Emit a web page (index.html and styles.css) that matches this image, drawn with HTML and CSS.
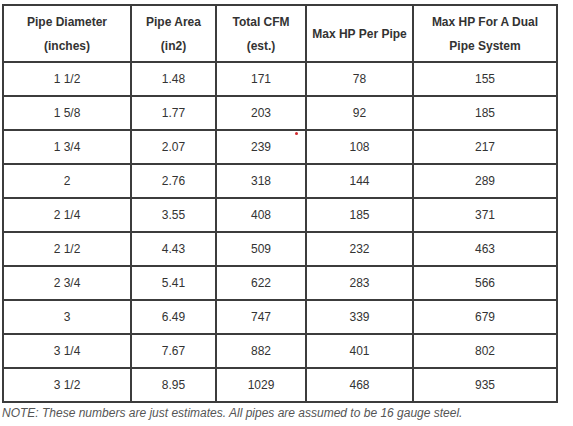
FILE: index.html
```html
<!DOCTYPE html>
<html lang="en">
<head>
    <meta charset="UTF-8">
    <title>Pipe Diameter Table</title>
    <link rel="stylesheet" href="styles.css">
</head>
<body>
    <div class="wrap">
        <table class="pipes">
            <colgroup>
                <col class="c1"><col class="c2"><col class="c3"><col class="c4"><col class="c5">
            </colgroup>
            <thead>
                <tr>
                    <th>Pipe Diameter<br>(inches)</th>
                    <th>Pipe Area<br>(in2)</th>
                    <th>Total CFM<br>(est.)</th>
                    <th>Max HP Per Pipe</th>
                    <th>Max HP For A Dual<br>Pipe System</th>
                </tr>
            </thead>
            <tbody>
                <tr><td>1 1/2</td><td>1.48</td><td>171</td><td>78</td><td>155</td></tr>
                <tr><td>1 5/8</td><td>1.77</td><td>203</td><td>92</td><td>185</td></tr>
                <tr><td>1 3/4</td><td>2.07</td><td>239</td><td>108</td><td>217</td></tr>
                <tr><td>2</td><td>2.76</td><td>318</td><td>144</td><td>289</td></tr>
                <tr><td>2 1/4</td><td>3.55</td><td>408</td><td>185</td><td>371</td></tr>
                <tr><td>2 1/2</td><td>4.43</td><td>509</td><td>232</td><td>463</td></tr>
                <tr><td>2 3/4</td><td>5.41</td><td>622</td><td>283</td><td>566</td></tr>
                <tr><td>3</td><td>6.49</td><td>747</td><td>339</td><td>679</td></tr>
                <tr><td>3 1/4</td><td>7.67</td><td>882</td><td>401</td><td>802</td></tr>
                <tr><td>3 1/2</td><td>8.95</td><td>1029</td><td>468</td><td>935</td></tr>
            </tbody>
        </table>
        <span class="dot"></span>
        <p class="note">NOTE: These numbers are just estimates. All pipes are assumed to be 16 gauge steel.</p>
    </div>
</body>
</html>
```

FILE: styles.css
```css
body {
    margin: 0;
    padding: 4px 0 0 2px;
    background: #fff;
    font-family: "Liberation Sans", Arial, sans-serif;
    color: #333;
}

.wrap {
    position: relative;
    width: 554px;
}

.pipes {
    width: 554px;
    table-layout: fixed;
    border-collapse: collapse;
    border: 2px solid #3c3c3c;
    font-size: 12px;
}
.c1 { width: 128px; }
.c2 { width: 85px; }
.c3 { width: 90px; }
.c4 { width: 107px; }
.c5 { width: 144px; }

.pipes th,
.pipes td {
    border: 2px solid #3c3c3c;
    text-align: center;
    vertical-align: middle;
    line-height: 24px;
    padding: 4px 2px;
}
.pipes th {
    font-weight: bold;
    color: #333;
    padding: 4px 2px 3px;
}

/* little red mark on the capture */
.dot {
    position: absolute;
    left: 293px;
    top: 128px;
    width: 3px;
    height: 3px;
    border-radius: 50%;
    background: #d0282c;
}

.note {
    margin: 3px 0 0;
    font-size: 12px;
    font-style: italic;
    color: #555;
}
```
